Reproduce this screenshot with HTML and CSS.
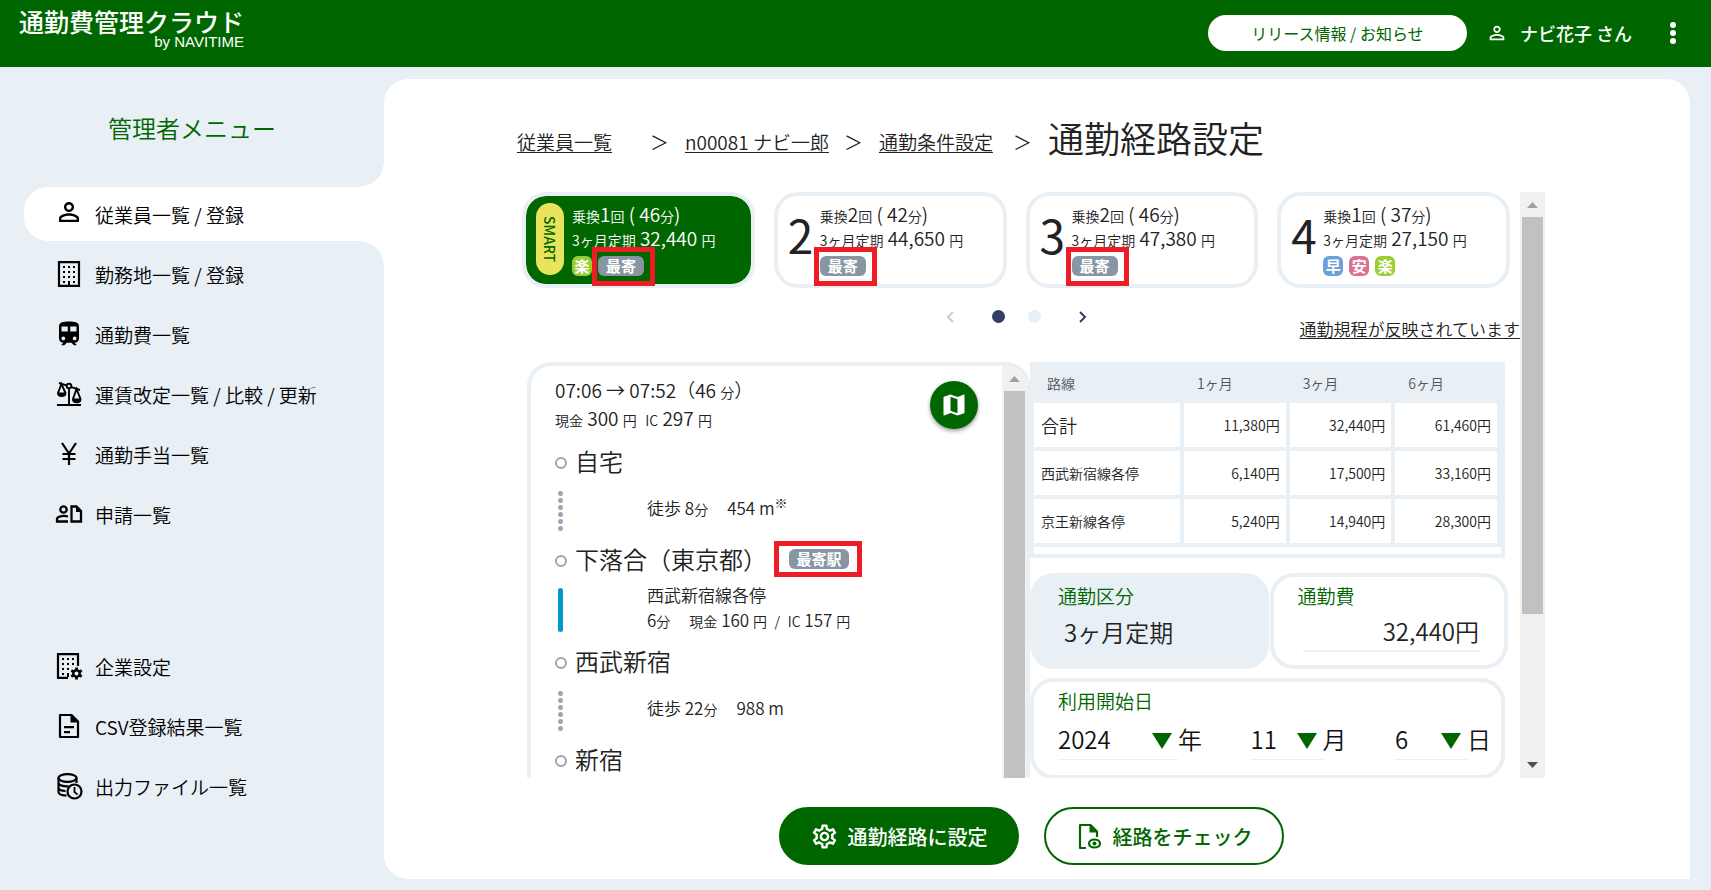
FILE: index.html
```html
<!DOCTYPE html>
<html lang="ja">
<head>
<meta charset="utf-8">
<title>通勤経路設定 | 通勤費管理クラウド</title>
<link rel="stylesheet" href="styles.css">
</head>
<body>
<svg class="defs" aria-hidden="true">
  <symbol id="person" viewBox="0 0 24 24"><path d="M12 5.9c1.16 0 2.1.94 2.1 2.1s-.94 2.1-2.1 2.1S9.9 9.16 9.9 8s.94-2.1 2.1-2.1m0 9c2.97 0 6.1 1.46 6.1 2.1v1.1H5.9V17c0-.64 3.13-2.1 6.1-2.1M12 4C9.79 4 8 5.79 8 8s1.79 4 4 4 4-1.79 4-4-1.79-4-4-4zm0 9c-2.67 0-8 1.34-8 4v3h16v-3c0-2.66-5.33-4-8-4z"/></symbol>
</svg>
<header class="topbar">
  <a class="logo" href="#"><span class="logo-name">通勤費管理クラウド</span><span class="logo-by">by NAVITIME</span></a>
  <div class="topbar-tools">
    <button class="news" type="button">リリース情報 / お知らせ</button>
    <span class="user"><svg class="user-icon" aria-hidden="true"><use href="#person"/></svg>ナビ花子 さん</span>
    <button class="kebab" type="button" aria-label="メニュー"><svg width="8" height="22" viewBox="0 0 8 22" aria-hidden="true"><circle cx="4" cy="3" r="3"/><circle cx="4" cy="11" r="3"/><circle cx="4" cy="19" r="3"/></svg></button>
  </div>
</header>
<div class="shell">
  <nav class="side" aria-label="管理者メニュー">
    <h2 class="side-title">管理者メニュー</h2>
    <ul class="menu">
      <li><a class="item active" href="#"><svg class="icon" aria-hidden="true"><use href="#person"/></svg>従業員一覧 / 登録</a></li>
      <li><a class="item" href="#"><svg class="icon" viewBox="0 0 30 30" aria-hidden="true"><path fill="none" stroke="#000" stroke-width="2.2" d="M5 3.1h20v23.8H5z"/><path d="M9 7h2v2H9zm5 0h2v2h-2zm5 0h2v2h-2zM9 12h2v2H9zm5 0h2v2h-2zm5 0h2v2h-2zM9 17h2v2H9zm5 0h2v2h-2zm5 0h2v2h-2zM9 22h2v2H9zm5 0h2v4h-2zm5 0h2v2h-2z"/></svg>勤務地一覧 / 登録</a></li>
      <li><a class="item" href="#"><svg class="icon" viewBox="0 0 24 24" aria-hidden="true"><path d="M12 2c-4.42 0-8 .5-8 4v9.5C4 17.43 5.57 19 7.5 19L6 20.5v.5h2.23l2-2H14l2 2h2v-.5L16.5 19c1.93 0 3.5-1.57 3.5-3.5V6c0-3.5-3.58-4-8-4zM7.5 17c-.83 0-1.5-.67-1.5-1.5S6.67 14 7.5 14s1.5.67 1.5 1.5S8.33 17 7.5 17zm3.5-7H6V6h5v4zm2 0V6h5v4h-5zm3.5 7c-.83 0-1.5-.67-1.5-1.5s.67-1.5 1.5-1.5 1.5.67 1.5 1.5-.67 1.5-1.5 1.5z"/></svg>通勤費一覧</a></li>
      <li><a class="item" href="#"><svg class="icon" viewBox="0 0 30 30" aria-hidden="true"><g fill="none" stroke="#000" stroke-width="1.9"><path d="M3 26h24M15 9v17M5 4l7.5 2.3M17.5 8.2L26 11"/><circle cx="15" cy="7" r="2.3"/><path d="M7.5 5L4 14c0 4 7.5 4 7.5 0zM22.5 10L19 20c0 4.5 7.5 4.5 7.5 0z"/></g><path d="M4 13.5h7.5c0 4-7.5 4-7.5 0zM19 19.5h7.5c0 4.5-7.5 4.5-7.5 0z"/></svg>運賃改定一覧 / 比較 / 更新</a></li>
      <li><a class="item" href="#"><svg class="icon" viewBox="0 0 30 30" aria-hidden="true"><path fill="none" stroke="#000" stroke-width="2.2" d="M8 4l7 10.5L22 4M15 14v12M8.5 15h13M8.5 20h13"/></svg>通勤手当一覧</a></li>
      <li><a class="item" href="#"><svg class="icon" viewBox="0 0 30 30" aria-hidden="true"><g fill="none" stroke="#000" stroke-width="2.3"><circle cx="9.5" cy="10.5" r="3.2"/><path d="M14 17.5C8 16 3 18 3 20v2.5h11M17.5 7.5v15h9.5V12l-4.5-4.5z"/></g><path d="M22 7v6h6z"/></svg>申請一覧</a></li>
    </ul>
    <ul class="menu">
      <li><a class="item" href="#"><svg class="icon" viewBox="0 0 30 30" aria-hidden="true"><path fill="none" stroke="#000" stroke-width="2.2" d="M24 15V3.1H4v23.8h10"/><path d="M8 7h2v2H8zm5 0h2v2h-2zm5 0h2v2h-2zM8 12h2v2H8zm5 0h2v2h-2zm5 0h2v2h-2zM8 17h2v2H8zm5 0h2v2h-2zM8 22h2v2H8zm5 0h2v4h-2z"/><circle cx="22.5" cy="22.5" r="3.2" fill="none" stroke="#000" stroke-width="2.4"/><path fill="none" stroke="#000" stroke-width="2.8" d="M22.5 16.5v2.5m0 7v2.5M17.3 19.5l2.2 1.25m6 3.5l2.2 1.25M17.3 25.5l2.2-1.25m6-3.5l2.2-1.25"/></svg>企業設定</a></li>
      <li><a class="item" href="#"><svg class="icon" viewBox="0 0 30 30" aria-hidden="true"><path fill="none" stroke="#000" stroke-width="2.2" stroke-linejoin="round" d="M6 4h11.5L24 10.5V26H6z"/><path d="M16.5 4v7.5H24zM10 15h10v2.2H10zm0 5h6v2.2h-6z"/></svg>CSV登録結果一覧</a></li>
      <li><a class="item" href="#"><svg class="icon" viewBox="0 0 30 30" aria-hidden="true"><g fill="none" stroke="#000" stroke-width="2.2"><ellipse cx="13.5" cy="7" rx="9" ry="3.8"/><path d="M4.5 7v14c0 2 3.5 3.3 8 3.7M22.5 7v5M4.5 12c0 2.5 5 3.5 10 3.3M4.5 16.5c0 2.3 3.5 3.3 7 3.5"/><circle cx="20.5" cy="20.5" r="7"/><path stroke-width="1.8" d="M20.5 16v5l3 2.7"/></g></svg>出力ファイル一覧</a></li>
    </ul>
  </nav>
  <main class="main">
    <div class="crumbs">
      <a class="crumb wide" href="#">従業員一覧</a><span class="sep">＞</span>
      <a class="crumb" href="#">n00081 ナビ一郎</a><span class="sep">＞</span>
      <a class="crumb last" href="#">通勤条件設定</a><span class="sep">＞</span>
      <h1 class="title">通勤経路設定</h1>
    </div>
    <div class="scroller">
      <div class="view">
        <div class="routes">
          <article class="route selected">
            <span class="smart">SMART</span>
            <div class="info">
              <p class="line">乗換<b>1</b>回<b> ( 46</b>分<b>)</b></p>
              <p class="line">3ヶ月定期<b> 32,440 </b>円</p>
              <p class="tags"><span class="tag easy">楽</span><span class="tag near marked">最寄</span></p>
            </div>
          </article>
          <article class="route">
            <span class="rank">2</span>
            <div class="info">
              <p class="line">乗換<b>2</b>回<b> ( 42</b>分<b>)</b></p>
              <p class="line">3ヶ月定期<b> 44,650 </b>円</p>
              <p class="tags"><span class="tag near marked">最寄</span></p>
            </div>
          </article>
          <article class="route">
            <span class="rank">3</span>
            <div class="info">
              <p class="line">乗換<b>2</b>回<b> ( 46</b>分<b>)</b></p>
              <p class="line">3ヶ月定期<b> 47,380 </b>円</p>
              <p class="tags"><span class="tag near marked">最寄</span></p>
            </div>
          </article>
          <article class="route">
            <span class="rank">4</span>
            <div class="info">
              <p class="line">乗換<b>1</b>回<b> ( 37</b>分<b>)</b></p>
              <p class="line">3ヶ月定期<b> 27,150 </b>円</p>
              <p class="tags"><span class="tag fast">早</span><span class="tag cheap">安</span><span class="tag easy">楽</span></p>
            </div>
          </article>
        </div>
        <div class="under">
          <div class="pager">
            <button class="arrow off" type="button" aria-label="前へ"><svg width="12" height="12" viewBox="0 0 12 12"><path d="M8 1L3 6l5 5"/></svg></button>
            <button class="dot on" type="button" aria-label="1ページ"></button>
            <button class="dot" type="button" aria-label="2ページ"></button>
            <button class="arrow" type="button" aria-label="次へ"><svg width="12" height="12" viewBox="0 0 12 12"><path d="M4 1l5 5-5 5"/></svg></button>
          </div>
          <a class="rule" href="#">通勤規程が反映されています</a>
        </div>
        <div class="detail">
          <section class="path">
            <div class="path-body">
              <div class="summary">
                <div>
                  <p class="sum"><b>07:06 → 07:52（46 </b>分<b>）</b></p>
                  <p class="sum">現金<b> 300 </b>円<b> &nbsp;</b>IC<b> 297 </b>円</p>
                </div>
                <button class="map" type="button" aria-label="地図"><svg width="28" height="28" viewBox="0 0 24 24"><path d="M20.5 3l-.16.03L15 5.1 9 3 3.36 4.9c-.21.07-.36.25-.36.48V20.5c0 .28.22.5.5.5l.16-.03L9 18.9l6 2.1 5.64-1.9c.21-.07.36-.25.36-.48V3.5c0-.28-.22-.5-.5-.5zM15 19l-6-2.11V5l6 2.11V19z"/></svg></button>
              </div>
              <div class="stop">自宅</div>
              <div class="leg"><span class="walk"></span><p class="leg-line">徒歩 8<small>分</small><span class="next">454 m<sup>※</sup></span></p></div>
              <div class="stop">下落合（東京都）<span class="tag near marked station">最寄駅</span></div>
              <div class="leg ride"><span class="rail"></span><div><p class="leg-line">西武新宿線各停</p><p class="leg-line">6<small>分</small><span class="next"><small>現金</small> 160 <small>円</small> &nbsp;<small>/</small> &nbsp;<small>IC</small> 157 <small>円</small></span></p></div></div>
              <div class="stop">西武新宿</div>
              <div class="leg"><span class="walk"></span><p class="leg-line">徒歩 22<small>分</small><span class="next">988 m</span></p></div>
              <div class="stop">新宿</div>
            </div>
            <div class="bar" aria-hidden="true"><svg class="bar-end" viewBox="0 0 25 25"><path fill="#a0a0a0" d="M7 16l5.5-6 5.5 6z"/></svg><span class="thumb" style="height:100%"></span></div>
          </section>
          <section class="fees">
            <table class="table">
              <colgroup><col class="c-line"><col><col><col></colgroup>
              <thead><tr><th scope="col">路線</th><th scope="col">1ヶ月</th><th scope="col">3ヶ月</th><th scope="col">6ヶ月</th></tr></thead>
              <tbody>
                <tr><th class="total" scope="row">合計</th><td>11,380円</td><td>32,440円</td><td>61,460円</td></tr>
                <tr><th scope="row">西武新宿線各停</th><td>6,140円</td><td>17,500円</td><td>33,160円</td></tr>
                <tr><th scope="row">京王新線各停</th><td>5,240円</td><td>14,940円</td><td>28,300円</td></tr>
              </tbody>
            </table>
            <div class="strip"></div>
            <div class="pair">
              <div class="box filled"><p class="label">通勤区分</p><p class="kind">3ヶ月定期</p></div>
              <div class="box"><label class="label" for="fee">通勤費</label><input class="fee" id="fee" type="text" value="32,440円"></div>
            </div>
            <fieldset class="box date">
              <legend class="label">利用開始日</legend>
              <div class="date-row">
                <label class="pick year"><select><option>2024</option></select><svg viewBox="0 0 20 16"><path d="M0 0h20L10 16z"/></svg><span>年</span></label>
                <label class="pick"><select><option>11</option></select><svg viewBox="0 0 20 16"><path d="M0 0h20L10 16z"/></svg><span>月</span></label>
                <label class="pick"><select><option>6</option></select><svg viewBox="0 0 20 16"><path d="M0 0h20L10 16z"/></svg><span>日</span></label>
              </div>
            </fieldset>
          </section>
        </div>
      </div>
      <div class="bar" aria-hidden="true"><svg class="bar-end" viewBox="0 0 25 25"><path fill="#a0a0a0" d="M7 16l5.5-6 5.5 6z"/></svg><span class="track"><span class="thumb" style="height:74%"></span></span><svg class="bar-end" viewBox="0 0 25 25"><path fill="#505050" d="M7 9l5.5 6L18 9z"/></svg></div>
    </div>
    <div class="actions">
      <button class="btn primary" type="button"><svg width="29" height="29" viewBox="0 0 24 24" aria-hidden="true"><path d="M19.43 12.98c.04-.32.07-.64.07-.98 0-.34-.03-.66-.07-.98l2.11-1.65c.19-.15.24-.42.12-.64l-2-3.46c-.09-.16-.26-.25-.44-.25-.06 0-.12.01-.17.03l-2.49 1c-.52-.4-1.08-.73-1.69-.98l-.38-2.65C14.46 2.18 14.25 2 14 2h-4c-.25 0-.46.18-.49.42l-.38 2.65c-.61.25-1.17.59-1.69.98l-2.49-1c-.06-.02-.12-.03-.18-.03-.17 0-.34.09-.43.25l-2 3.46c-.13.22-.07.49.12.64l2.11 1.65c-.04.32-.07.65-.07.98 0 .33.03.66.07.98l-2.11 1.65c-.19.15-.24.42-.12.64l2 3.46c.09.16.26.25.44.25.06 0 .12-.01.17-.03l2.49-1c.52.4 1.08.73 1.69.98l.38 2.65c.03.24.24.42.49.42h4c.25 0 .46-.18.49-.42l.38-2.65c.61-.25 1.17-.59 1.69-.98l2.49 1c.06.02.12.03.18.03.17 0 .34-.09.43-.25l2-3.46c.12-.22.07-.49-.12-.64l-2.11-1.65zm-1.98-1.71c.04.31.05.52.05.73 0 .21-.02.43-.05.73l-.14 1.13.89.7 1.08.84-.7 1.21-1.27-.51-1.04-.42-.9.68c-.43.32-.84.56-1.25.73l-1.06.43-.16 1.13-.2 1.35h-1.4l-.19-1.35-.16-1.13-1.06-.43c-.43-.18-.83-.41-1.23-.71l-.91-.7-1.06.43-1.27.51-.7-1.21 1.08-.84.89-.7-.14-1.13c-.03-.31-.05-.54-.05-.74s.02-.43.05-.73l.14-1.13-.89-.7-1.08-.84.7-1.21 1.27.51 1.04.42.9-.68c.43-.32.84-.56 1.25-.73l1.06-.43.16-1.13.2-1.35h1.39l.19 1.35.16 1.13 1.06.43c.43.18.83.41 1.23.71l.91.7 1.06-.43 1.27-.51.7 1.21-1.07.85-.89.7.14 1.13zM12 8c-2.21 0-4 1.79-4 4s1.79 4 4 4 4-1.79 4-4-1.79-4-4-4zm0 6c-1.1 0-2-.9-2-2s.9-2 2-2 2 .9 2 2-.9 2-2 2z"/></svg>通勤経路に設定</button>
      <button class="btn" type="button"><svg width="29" height="29" viewBox="0 0 29 29" aria-hidden="true"><path fill="none" stroke="#060" stroke-width="2.2" stroke-linejoin="round" d="M11 26H5V3h10.5L22 9.5V15"/><path d="M14.5 3v7.5H22z"/><ellipse cx="19.5" cy="21.5" rx="5.5" ry="4" fill="none" stroke="#060" stroke-width="2.2"/><circle cx="19.5" cy="21.5" r="2"/></svg>経路をチェック</button>
    </div>
  </main>
</div>
</body>
</html>
```

FILE: styles.css
```css
*, ::before, ::after { box-sizing: border-box; }
body {
  margin: 0;
  height: 100vh;
  display: flex;
  flex-direction: column;
  background: #e8eff5;
  color: #222;
  font-family: "Noto Sans CJK JP", sans-serif;
  font-weight: 350;
  font-size: 19px;
}
p, h1, h2, ul { margin: 0; padding: 0; font-weight: inherit; }
ul { list-style: none; }
button, input, select { font: inherit; color: inherit; margin: 0; padding: 0; border: 0; background: none; }
button { cursor: pointer; }
a { color: inherit; }
.defs { position: absolute; width: 0; height: 0; }

.topbar { display: flex; justify-content: space-between; height: 67px; background: #060; color: #fff; }
.logo { display: flex; flex-direction: column; align-items: flex-end; padding: 7px 0 0 19px; text-decoration: none; }
.logo-name { font-size: 25px; font-weight: 500; line-height: 28px; }
.logo-by { font-family: "Liberation Sans", sans-serif; font-size: 15px; font-weight: 400; line-height: 14px; }
.topbar-tools { display: flex; align-items: center; padding: 0 28px 2px 0; }
.news { width: 259px; height: 36px; border-radius: 18px; background: #fff; color: #060; font-size: 16px; font-weight: 400; }
.user { display: flex; align-items: center; gap: 12px; margin: 0 31px 0 19px; font-size: 18px; font-weight: 500; }
.user-icon { width: 22px; height: 22px; fill: #fff; }
.kebab { display: flex; justify-content: center; width: 20px; }
.kebab svg { fill: #fff; }

.shell { flex: 1; min-height: 0; display: flex; }
.side { width: 384px; flex: none; color: #000; }
.side-title { padding: 43px 0 41px; color: #060; font-size: 24px; line-height: 36px; text-align: center; }
.menu { display: flex; flex-direction: column; gap: 6px; padding-left: 24px; }
.menu + .menu { margin-top: 98px; }
.item { position: relative; display: flex; align-items: center; gap: 11px; height: 54px; padding-left: 30px; text-decoration: none; }
.icon { width: 30px; height: 30px; margin-bottom: 1px; }
.active { background: #fff; border-radius: 24px 0 0 24px; }
.active .icon { margin-bottom: 4px; }
.active::before, .active::after { content: ""; position: absolute; right: 0; width: 24px; height: 24px; }
.active::before { bottom: 100%; background: radial-gradient(circle at 0 0, transparent 23px, #fff 24px); }
.active::after { top: 100%; background: radial-gradient(circle at 0 100%, transparent 23px, #fff 24px); }

.main {
  flex: 1;
  min-width: 0;
  display: flex;
  flex-direction: column;
  margin: 12px 21px 11px 0;
  padding: 0 145px 14px 133px;
  background: #fff;
  border-radius: 24px 24px 0 24px;
}
.crumbs { display: flex; align-items: center; gap: 15px; padding: 33px 0 22px; white-space: nowrap; }
.crumb { text-underline-offset: 2px; }
.wide { margin-right: 23px; }
.last { margin-right: 5px; }
.sep { width: 20px; }
.title { padding-bottom: 8px; font-size: 36px; line-height: 50px; }

.scroller { flex: 1; min-height: 0; display: flex; }
.view { flex: 1; min-width: 0; overflow: hidden; display: flex; flex-direction: column; }
.bar { flex: none; width: 25px; display: flex; flex-direction: column; padding: 0 2px; background: #f1f1f1; }
.bar-end { flex: none; width: 25px; height: 25px; margin: 0 -2px; }
.track { flex: 1; }
.thumb { display: block; background: #c1c1c1; }

.routes { display: grid; grid-template-columns: repeat(4, 1fr); gap: 19px; padding: 0 10px 0 5px; }
.route { display: flex; height: 96px; padding: 7px 0 0 10px; border: 4px solid #e8eff5; border-radius: 24px; white-space: nowrap; }
.selected { background: #060; background-clip: padding-box; color: #fff; }
.smart { width: 28px; height: 72px; margin-right: 8px; border-radius: 14px; background: #e9e45b; color: #060; font-size: 14px; font-weight: 500; line-height: 28px; text-align: center; writing-mode: vertical-rl; }
.rank { width: 32px; font-size: 46px; font-weight: 400; line-height: 62px; }
.line { font-size: 14px; line-height: 22px; }
.line b, .sum b { font-size: 19px; font-weight: inherit; }
.tags { display: flex; gap: 6px; padding-top: 5px; }
.tag { display: inline-block; width: 20px; height: 20px; border-radius: 6px; color: #fff; font-size: 15px; font-weight: 700; line-height: 20px; text-align: center; }
.easy { background: #9acd32; }
.fast { background: #6c9fdc; }
.cheap { background: #db7093; }
.near { width: 46px; background: #8796a2; }
.marked { position: relative; }
.marked::after { content: ""; position: absolute; inset: -9px -11px -10px -6px; border: 5px solid #ee1c24; }

.under { display: grid; grid-template-columns: 1fr auto 1fr; flex: none; height: 74px; }
.pager { grid-column: 2; align-self: start; display: flex; align-items: center; padding-top: 22px; margin-right: 4px; }
.arrow { display: flex; width: 12px; margin: 0 35px; }
.arrow:first-child { margin-left: 0; }
.arrow:last-child { margin-right: 0; }
.arrow path { fill: none; stroke: #323e62; stroke-width: 2; }
.off path { stroke: #c8ccd6; }
.dot { width: 13px; height: 13px; border-radius: 50%; background: #e8eff5; }
.dot + .dot { margin-left: 23px; }
.on { background: #323e62; }
.rule { justify-self: end; align-self: start; padding-top: 28px; font-size: 17px; line-height: 26px; text-underline-offset: 2px; white-space: nowrap; }

.detail { flex: 1; min-height: 0; display: grid; grid-template-columns: 503fr 478fr; grid-template-rows: 100%; padding: 0 12px 0 10px; }
.path { display: flex; overflow: hidden; border: 4px solid #e8eff5; border-right-width: 3px; border-bottom: 0; border-radius: 24px 24px 0 0; }
.path-body { flex: 1; min-width: 0; padding: 11px 24px 0; white-space: nowrap; }
.summary { display: flex; justify-content: space-between; height: 63px; }
.sum { font-size: 14px; line-height: 26px; }
.map { display: flex; align-items: center; justify-content: center; width: 48px; height: 48px; margin-top: 4px; border-radius: 50%; background: #060; box-shadow: 0 2px 4px rgba(0, 0, 0, .4); }
.map svg { fill: #fff; }
.stop { display: flex; align-items: center; height: 42px; font-size: 24px; line-height: 42px; }
.stop::before { content: ""; width: 12px; height: 12px; margin: 4px 8px 0 0; border: 2px solid #a0a5b4; border-radius: 50%; }
.leg { display: flex; align-items: center; height: 56px; }
.ride { height: 60px; }
.leg > p, .leg > div { margin: 0 0 4px 84px; }
.leg-line { font-size: 17px; line-height: 25px; }
.leg-line small { font-size: 14px; }
.leg-line sup { font-size: 13px; line-height: 0; }
.next { margin-left: 19px; }
.walk { width: 5px; height: 41px; margin-left: 3px; background: radial-gradient(circle, #a0a5b4 2px, transparent 3px) 0 0 / 5px 7px; }
.rail { width: 5px; height: 44px; margin-left: 3px; border-radius: 3px; background: #09c; }
.station { width: 60px; margin-left: 22px; }
.station::after { inset: -8px -13px -8px -15px; }

.fees { min-width: 0; overflow: hidden; }
.table { width: calc(100% - 3px); table-layout: fixed; border-collapse: separate; border-spacing: 4px; border-right: 4px solid #e8eff5; background: #e8eff5; font-size: 14px; }
.c-line { width: 146px; }
.table th { padding: 0 7px; font-weight: inherit; text-align: left; }
.table thead th { height: 33px; padding-left: 13px; color: #555; }
.table tbody th, .table td { height: 44px; background: #fff; }
.table .total { font-size: 18px; }
.table td { padding: 0 6px; text-align: right; }
.strip { width: calc(100% - 3px); height: 11px; border: solid #e8eff5; border-width: 0 4px 4px; }
.pair { display: grid; grid-template-columns: 1fr 1fr; gap: 1px; padding-top: 15px; }
.box { min-width: 0; height: 96px; margin: 0; padding: 4px 24px 0; border: 4px solid #e8eff5; border-radius: 24px; }
.filled { background: #e8eff5; }
.label { display: block; padding: 0; color: #060; line-height: 30px; }
.kind { padding: 0 6px; font-size: 24px; line-height: 42px; }
.fee { display: block; width: calc(100% - 5px); height: 41px; margin-left: 5px; padding-right: 1px; border-bottom: 2px solid #e8eff5; font-size: 24px; text-align: right; }
.date { width: calc(100% - 3px); height: 101px; margin-top: 9px; }
.date .label { float: left; width: 100%; }
.date-row { clear: both; display: flex; justify-content: space-between; margin-right: -14px; padding-top: 2px; font-size: 24px; }
.pick { position: relative; display: flex; width: 96px; line-height: 42px; color: #111; }
.year { width: 144px; }
.pick select { flex: 1; min-width: 0; height: 42px; border-bottom: 1px solid #e8eff5; appearance: none; }
.pick svg { position: absolute; right: 30px; top: 15px; width: 20px; height: 16px; fill: #060; }
.pick span { width: 24px; }

.actions { display: flex; justify-content: center; gap: 25px; padding-top: 29px; }
.btn { display: flex; align-items: center; justify-content: center; gap: 9px; width: 240px; height: 58px; border: 2px solid #060; border-radius: 29px; color: #060; font-size: 20px; font-weight: 500; }
.btn svg { fill: #060; }
.primary { background: #060; color: #fff; }
.primary svg { fill: #fff; }
```
